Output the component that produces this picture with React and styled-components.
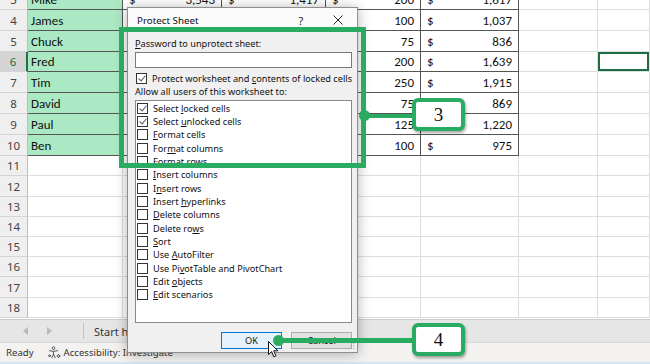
import React from 'react';
import styled, { createGlobalStyle } from 'styled-components';

const GlobalStyle = createGlobalStyle`
  html, body {
    margin: 0;
    padding: 0;
    background: #ffffff;
  }
  body {
    width: 650px;
    height: 364px;
    overflow: hidden;
  }
`;

const UI_FONT = '"Segoe UI", "Noto Sans", sans-serif';
const CELL_FONT = 'Calibri, Lato, sans-serif';
const GREEN = '#2aab62';

// rows 3..10 hold the table, F = D + E
const people = [
  ['Mike', '3,543', '1,417', '200', '1,617'],
  ['James', '2,914', '937', '100', '1,037'],
  ['Chuck', '2,286', '761', '75', '836'],
  ['Fred', '3,874', '1,439', '200', '1,639'],
  ['Tim', '4,110', '1,665', '250', '1,915'],
  ['David', '2,402', '794', '75', '869'],
  ['Paul', '3,118', '1,095', '125', '1,220'],
  ['Ben', '2,650', '875', '100', '975'],
];

const rows = Array.from({ length: 16 }, (_, i) => ({
  n: i + 3,
  data: people[i] || null,
  height: i + 3 <= 11 ? 20.8 : 20.2,
}));

const options = [
  { pre: 'Select ', key: 'l', post: 'ocked cells', checked: true },
  { pre: 'Select ', key: 'u', post: 'nlocked cells', checked: true },
  { pre: '', key: 'F', post: 'ormat cells' },
  { pre: 'For', key: 'm', post: 'at columns' },
  { pre: 'Format ', key: 'r', post: 'ows' },
  { pre: '', key: 'I', post: 'nsert columns' },
  { pre: 'I', key: 'n', post: 'sert rows' },
  { pre: 'Insert ', key: 'h', post: 'yperlinks' },
  { pre: '', key: 'D', post: 'elete columns' },
  { pre: 'Delete ro', key: 'w', post: 's' },
  { pre: '', key: 'S', post: 'ort' },
  { pre: 'Use ', key: 'A', post: 'utoFilter' },
  { pre: 'Use Pi', key: 'v', post: 'otTable and PivotChart' },
  { pre: 'Edit ', key: 'o', post: 'bjects' },
  { pre: '', key: 'E', post: 'dit scenarios' },
];

export default function App() {
  return (
    <>
      <GlobalStyle />
      <Window>
        <Sheet>
          <Rows>
            {rows.map((r) => (
              <Row key={r.n} $h={r.height}>
                <RowHead $selected={r.n === 6}>{r.n}</RowHead>
                {r.data ? (
                  <>
                    <NameCell>{r.data[0]}</NameCell>
                    <MoneyCell $boxed>
                      <span>$</span>
                      <span>{r.data[1]}</span>
                    </MoneyCell>
                    <MoneyCell $boxed>
                      <span>$</span>
                      <span>{r.data[2]}</span>
                    </MoneyCell>
                    <MoneyCell $boxed>
                      <span>$</span>
                      <span>{r.data[3]}</span>
                    </MoneyCell>
                    <MoneyCell $boxed>
                      <span>$</span>
                      <span>{r.data[4]}</span>
                    </MoneyCell>
                  </>
                ) : (
                  <>
                    <Cell />
                    <Cell />
                    <Cell />
                    <Cell />
                    <Cell />
                  </>
                )}
                <Cell />
                <Cell $active={r.n === 6} />
              </Row>
            ))}
          </Rows>
        </Sheet>

        <TabBar>
          <NavArrow>
            <svg width="6" height="8" viewBox="0 0 6 8">
              <polygon points="5,0 5,8 0,4" fill="#b9b9b9" />
            </svg>
          </NavArrow>
          <NavArrow>
            <svg width="6" height="8" viewBox="0 0 6 8">
              <polygon points="1,0 1,8 6,4" fill="#b9b9b9" />
            </svg>
          </NavArrow>
          <TabDivider />
          <SheetTab>Start here</SheetTab>
        </TabBar>

        <StatusBar>
          <StatusText>Ready</StatusText>
          <A11y>
            <svg width="13" height="13" viewBox="0 0 13 13" fill="none" stroke="#444" strokeWidth="0.9">
              <circle cx="5.5" cy="2.2" r="1.3" />
              <path d="M1 4.6 L5.5 5.4 L10 4.6" />
              <path d="M5.5 5.4 L5.5 8.2 L3.6 12 M5.5 8.2 L7.4 12" />
              <path d="M10.6 8.2 L11.2 9.4 L12.4 10 L11.2 10.6 L10.6 11.8 L10 10.6 L8.8 10 L10 9.4 Z" />
              <path d="M1.6 8.6 L2 9.4 L2.8 9.8 L2 10.2 L1.6 11 L1.2 10.2 L0.4 9.8 L1.2 9.4 Z" />
            </svg>
            <StatusText>Accessibility: Investigate</StatusText>
          </A11y>
        </StatusBar>

        <Dialog>
          <TitleBar>
            <Title>Protect Sheet</Title>
            <TitleButton>?</TitleButton>
            <TitleButton>
              <svg width="10" height="10" viewBox="0 0 10 10" stroke="#222" strokeWidth="1">
                <path d="M0.5 0.5 L9.5 9.5 M9.5 0.5 L0.5 9.5" />
              </svg>
            </TitleButton>
          </TitleBar>
          <DialogBody>
            <Label>
              <u>P</u>assword to unprotect sheet:
            </Label>
            <PasswordBox />
            <CheckRow>
              <CheckBox $checked />
              <span>
                Protect worksheet and <u>c</u>ontents of locked cells
              </span>
            </CheckRow>
            <Label $gap={1.5}>Allow all users of this worksheet to:</Label>
            <ListBox>
              {options.map((o) => (
                <ListItem key={o.pre + o.key + o.post}>
                  <CheckBox $checked={o.checked} />
                  <span>
                    {o.pre}
                    <u>{o.key}</u>
                    {o.post}
                  </span>
                </ListItem>
              ))}
            </ListBox>
            <ButtonRow>
              <DialogButton $primary>OK</DialogButton>
              <DialogButton>Cancel</DialogButton>
            </ButtonRow>
          </DialogBody>
          <Grip>
            <svg width="7" height="7" viewBox="0 0 7 7" fill="#a8a8a8">
              <rect x="5" y="0" width="1.2" height="1.2" />
              <rect x="2.5" y="2.5" width="1.2" height="1.2" />
              <rect x="5" y="2.5" width="1.2" height="1.2" />
              <rect x="0" y="5" width="1.2" height="1.2" />
              <rect x="2.5" y="5" width="1.2" height="1.2" />
              <rect x="5" y="5" width="1.2" height="1.2" />
            </svg>
          </Grip>
        </Dialog>

        <Cursor>
          <svg width="12" height="18" viewBox="0 0 12 18">
            <path
              d="M0.5 0.5 L0.5 13.5 L3.6 10.6 L5.8 15.8 L7.9 14.9 L5.7 9.8 L9.9 9.8 Z"
              fill="#fff"
              stroke="#111"
              strokeWidth="1"
              strokeLinejoin="round"
            />
          </svg>
        </Cursor>

        <Highlight />
        <Connector $x={364} $y={113.5} $w={50} />
        <Dot $x={364} $y={115.7} />
        <Callout $x={412} $y={98}>3</Callout>

        <Connector $x={278} $y={338} $w={136} />
        <Dot $x={278} $y={340.5} />
        <Callout $x={412} $y={323}>4</Callout>
      </Window>
    </>
  );
}

const Window = styled.div`
  position: relative;
  width: 650px;
  height: 364px;
  overflow: hidden;
  display: flex;
  flex-direction: column;
  background: #ffffff;
`;

const Sheet = styled.div`
  height: 319px;
  overflow: hidden;
  flex-shrink: 0;
`;

/* the sheet is scrolled so that row 3 is cut at the top */
const Rows = styled.div`
  margin-top: -10.8px;
`;

const Row = styled.div`
  display: grid;
  grid-template-columns: 28px 95px 99px 104px 95px 98px 79px 1fr;
  height: ${(p) => p.$h}px;
  font-family: ${CELL_FONT};
  font-size: 13px;
  color: #111;
`;

const Cell = styled.div`
  box-sizing: border-box;
  display: flex;
  align-items: flex-end;
  padding: 0 4px 2px;
  line-height: 15px;
  border-right: 1px solid ${(p) => (p.$boxed ? '#555' : '#dedede')};
  border-bottom: 1px solid ${(p) => (p.$boxed ? '#555' : '#dedede')};
  background: ${(p) => p.$fill || 'transparent'};
  box-shadow: ${(p) => (p.$active ? 'inset 0 0 0 2px #1f6e43' : 'none')};
`;

const NameCell = styled(Cell).attrs({ $boxed: true, $fill: '#aae9c4' })`
  padding-left: 3px;
`;

const MoneyCell = styled(Cell)`
  justify-content: space-between;
  padding-left: 6px;
  padding-right: 6px;
`;

const RowHead = styled.div`
  box-sizing: border-box;
  display: flex;
  align-items: flex-end;
  justify-content: center;
  padding-bottom: 2px;
  line-height: 15px;
  font-family: ${UI_FONT};
  font-size: 11.5px;
  color: ${(p) => (p.$selected ? '#1d6b40' : '#444')};
  background: ${(p) => (p.$selected ? '#d4d4d4' : '#efefef')};
  border-bottom: 1px solid #d4d4d4;
  border-right: ${(p) => (p.$selected ? '2px solid #217346' : '1px solid #bdbdbd')};
`;

const TabBar = styled.div`
  height: 24px;
  flex-shrink: 0;
  display: flex;
  align-items: center;
  background: #e6e6e6;
  border-top: 1px solid #cdcdcd;
  border-bottom: 1px solid #d8d8d8;
  box-sizing: border-box;
  font-family: ${UI_FONT};
`;

const NavArrow = styled.div`
  width: 23px;
  display: flex;
  justify-content: center;
  &:first-child {
    margin-left: 14px;
  }
`;

const TabDivider = styled.div`
  width: 1px;
  height: 16px;
  margin-left: 23px;
  background: #c4c4c4;
`;

const SheetTab = styled.div`
  padding-left: 10px;
  font-size: 11px;
  color: #333;
`;

const StatusBar = styled.div`
  flex: 1;
  display: flex;
  align-items: center;
  gap: 14px;
  padding-left: 6px;
  background: #f3f2f1;
  border-bottom: 2px solid #d3e4f3;
  font-family: ${UI_FONT};
`;

const StatusText = styled.span`
  font-size: 9.6px;
  color: #333;
`;

const A11y = styled.div`
  display: flex;
  align-items: center;
  gap: 3px;
`;

const Dialog = styled.div`
  position: absolute;
  left: 127px;
  top: 7px;
  width: 231px;
  height: 346px;
  box-sizing: border-box;
  display: flex;
  flex-direction: column;
  background: #f0f0f0;
  border: 1px solid #8e8e8e;
  box-shadow: 0 1px 12px rgba(0, 0, 0, 0.3);
  font-family: ${UI_FONT};
  font-size: 9.2px;
  color: #111;
  white-space: nowrap;
`;

const TitleBar = styled.div`
  height: 24px;
  display: flex;
  align-items: center;
  gap: 5px;
  padding: 0 3px 0 9px;
  background: #fbfbfb;
`;

const Title = styled.div`
  flex: 1;
  font-size: 9.8px;
`;

const TitleButton = styled.div`
  width: 32px;
  display: flex;
  justify-content: center;
  font-size: 11px;
  color: #222;
`;

const DialogBody = styled.div`
  display: flex;
  flex-direction: column;
  padding: 6px 5px 0 7px;
`;

const Label = styled.div`
  height: 12px;
  line-height: 12px;
  margin-top: ${(p) => p.$gap || 0}px;
`;

const PasswordBox = styled.div`
  height: 16px;
  margin-top: 2px;
  box-sizing: border-box;
  background: #fff;
  border: 1px solid #7a7a7a;
`;

const CheckRow = styled.div`
  height: 13px;
  margin-top: 3.5px;
  display: flex;
  align-items: center;
  gap: 5px;
  padding-left: 1px;
`;

const CheckBox = styled.span`
  position: relative;
  width: 11px;
  height: 11px;
  flex-shrink: 0;
  box-sizing: border-box;
  border: 1px solid #333;
  background: #fff;
  &::after {
    content: '';
    display: ${(p) => (p.$checked ? 'block' : 'none')};
    position: absolute;
    left: 3px;
    top: 0.5px;
    width: 3px;
    height: 6px;
    border-right: 1px solid #555;
    border-bottom: 1px solid #555;
    transform: rotate(40deg);
  }
`;

const ListBox = styled.div`
  height: 223px;
  margin-top: 2px;
  box-sizing: border-box;
  padding: 0.5px 1px;
  background: #fff;
  border: 1px solid #8a8a8a;
`;

const ListItem = styled.div`
  height: 13.33px;
  display: flex;
  align-items: center;
  gap: 5px;
`;

const ButtonRow = styled.div`
  display: flex;
  justify-content: flex-end;
  gap: 9px;
  margin-top: 8.7px;
`;

const DialogButton = styled.div`
  width: 61px;
  height: 17px;
  box-sizing: border-box;
  display: flex;
  align-items: center;
  justify-content: center;
  background: ${(p) => (p.$primary ? '#e5f1fb' : '#e1e1e1')};
  border: 1px solid ${(p) => (p.$primary ? '#0078d7' : '#adadad')};
`;

const Grip = styled.div`
  position: absolute;
  right: 2px;
  bottom: 2px;
  display: flex;
`;

const Cursor = styled.div`
  position: absolute;
  left: 268px;
  top: 341px;
  display: flex;
`;

const Highlight = styled.div`
  position: absolute;
  left: 119px;
  top: 27px;
  width: 247px;
  height: 141px;
  box-sizing: border-box;
  border: 5px solid ${GREEN};
`;

const Connector = styled.div`
  position: absolute;
  left: ${(p) => p.$x}px;
  top: ${(p) => p.$y}px;
  width: ${(p) => p.$w}px;
  height: 4.5px;
  background: ${GREEN};
`;

const Dot = styled.div`
  position: absolute;
  left: ${(p) => p.$x - 5.5}px;
  top: ${(p) => p.$y - 5.5}px;
  width: 11px;
  height: 11px;
  border-radius: 50%;
  background: ${GREEN};
`;

const Callout = styled.div`
  position: absolute;
  left: ${(p) => p.$x}px;
  top: ${(p) => p.$y}px;
  width: 53px;
  height: 33px;
  box-sizing: border-box;
  display: flex;
  align-items: center;
  justify-content: center;
  background: #fff;
  border: 4.5px solid ${GREEN};
  border-radius: 6px;
  box-shadow: 1px 2px 3px rgba(0, 0, 0, 0.35);
  font-family: 'Liberation Serif', serif;
  font-size: 19px;
  color: #111;
`;
